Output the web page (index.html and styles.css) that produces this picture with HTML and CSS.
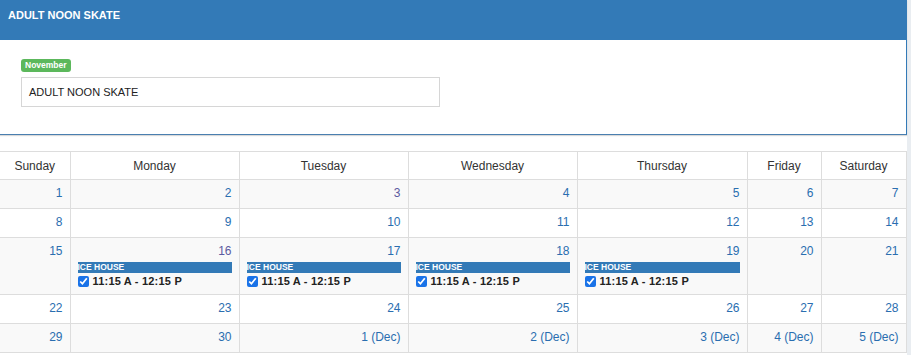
FILE: index.html
```html
<!DOCTYPE html>
<html>
<head>
<meta charset="utf-8">
<link rel="stylesheet" href="styles.css">
</head>
<body>
<div class="page">
  <div class="panel">
    <div class="panel-head">ADULT NOON SKATE</div>
    <div class="panel-body">
      <span class="badge">November</span>
      <div class="field">ADULT NOON SKATE</div>
    </div>
  </div>
  <table class="cal">
    <colgroup>
      <col class="c-sun"><col class="c-mon"><col class="c-tue"><col class="c-wed"><col class="c-thu"><col class="c-fri"><col class="c-sat">
    </colgroup>
    <thead>
      <tr><th>Sunday</th><th>Monday</th><th>Tuesday</th><th>Wednesday</th><th>Thursday</th><th>Friday</th><th>Saturday</th></tr>
    </thead>
    <tbody>
      <tr class="odd"><td>1</td><td>2</td><td class="visited">3</td><td>4</td><td>5</td><td>6</td><td>7</td></tr>
      <tr><td>8</td><td>9</td><td>10</td><td>11</td><td>12</td><td>13</td><td>14</td></tr>
      <tr class="odd ev">
        <td>15</td>
        <td><div class="num visited">16</div><div class="loc">ICE HOUSE</div><label class="slot"><input type="checkbox" checked>11:15 A - 12:15 P</label></td>
        <td><div class="num">17</div><div class="loc">ICE HOUSE</div><label class="slot"><input type="checkbox" checked>11:15 A - 12:15 P</label></td>
        <td><div class="num">18</div><div class="loc">ICE HOUSE</div><label class="slot"><input type="checkbox" checked>11:15 A - 12:15 P</label></td>
        <td><div class="num">19</div><div class="loc">ICE HOUSE</div><label class="slot"><input type="checkbox" checked>11:15 A - 12:15 P</label></td>
        <td>20</td>
        <td>21</td>
      </tr>
      <tr><td>22</td><td>23</td><td>24</td><td>25</td><td>26</td><td>27</td><td>28</td></tr>
      <tr class="odd"><td>29</td><td>30</td><td>1 (Dec)</td><td>2 (Dec)</td><td>3 (Dec)</td><td>4 (Dec)</td><td>5 (Dec)</td></tr>
    </tbody>
  </table>
</div>
</body>
</html>
```

FILE: styles.css
```css
html, body {
  margin: 0;
  padding: 0;
}
body {
  background: #e9edf1;
  font-family: "Liberation Sans", Arial, sans-serif;
  font-size: 12px;
  color: #333;
}
.page {
  width: 907px;
  background: #fff;
  padding-bottom: 2px;
}
.panel {
  border-right: 1px solid #337ab7;
  border-bottom: 1px solid #4a7fb0;
  box-shadow: 0 1px 1px rgba(0,0,0,0.15);
}
.panel-head {
  background: #337ab7;
  color: #fff;
  font-weight: bold;
  font-size: 11px;
  height: 40px;
  box-sizing: border-box;
  padding: 9px 8px;
}
.panel-body {
  padding: 19px 21px 27px;
}
.badge {
  display: inline-block;
  background: #5cb85c;
  color: #fff;
  font-size: 8.5px;
  font-weight: bold;
  line-height: 13px;
  padding: 0 4px;
  border-radius: 3px;
  vertical-align: top;
}
.field {
  margin-top: 4px;
  width: 419px;
  height: 30px;
  box-sizing: border-box;
  border: 1px solid #d6d6d6;
  padding: 7px 7px;
  line-height: 14px;
  font-size: 11px;
  color: #222;
}
.cal {
  margin-top: 16px;
  width: 906px;
  border-collapse: collapse;
  table-layout: fixed;
}
.c-sun { width: 70px; }
.c-mon { width: 169px; }
.c-tue { width: 169px; }
.c-wed { width: 169px; }
.c-thu { width: 170px; }
.c-fri { width: 74px; }
.c-sat { width: 85px; }
.cal th, .cal td {
  border: 1px solid #ddd;
}
.cal th:first-child, .cal td:first-child {
  border-left: none;
}
.cal th {
  font-weight: normal;
  color: #333;
  height: 27px;
  padding: 0;
  text-align: center;
}
.cal td {
  text-align: right;
  color: #2a6eb0;
  padding: 7px 7px 8px;
  height: 13px;
  line-height: 13px;
  vertical-align: top;
}
.cal td.visited, .num.visited { color: #5b5aa0; }
.cal tr.odd td { background: #f9f9f9; }
.cal tr.ev td {
  height: 43px;
  padding-bottom: 6px;
}
.num { line-height: 13px; }
.loc {
  margin-top: 4px;
  background: #337ab7;
  color: #fff;
  font-size: 8.5px;
  font-weight: bold;
  line-height: 11px;
  text-align: left;
}
.slot {
  display: flex;
  align-items: center;
  margin-top: 2px;
  color: #222;
  font-weight: bold;
  font-size: 11px;
  line-height: 13px;
  text-align: left;
  letter-spacing: 0.2px;
}
.slot input {
  margin: 0 4px 0 0;
  width: 11px;
  height: 11px;
  accent-color: #1a73e8;
}
```
